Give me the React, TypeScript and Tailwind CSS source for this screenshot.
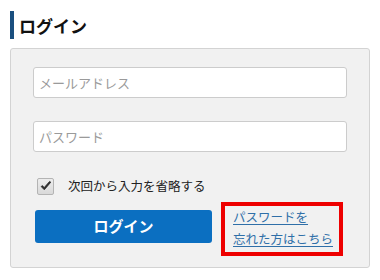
export default function App() {
  return (
    <div className="w-[380px] h-[280px] bg-white font-['Noto_Sans_CJK_JP',sans-serif] text-[#222]">
      <div className="pt-[11px] pl-[10px]">
        <h2 className="border-l-[4px] border-[#1a4f7f] pl-[5px] h-[28px] flex items-center text-[17px] font-bold leading-none text-[#111]">
          ログイン
        </h2>
      </div>

      <div className="mx-[10px] mt-[9px] h-[220px] rounded-[3px] border border-[#d3d3d3] bg-[#f1f1f1] px-[22px] pt-[18px]">
        <input
          type="text"
          placeholder="メールアドレス"
          className="block w-full h-[31px] rounded-[3px] border border-[#cccccc] bg-white px-[5px] text-[13px] placeholder:text-[#9a9a9a] outline-none"
        />
        <input
          type="password"
          placeholder="パスワード"
          className="mt-[23px] block w-full h-[31px] rounded-[3px] border border-[#cccccc] bg-white px-[5px] text-[13px] placeholder:text-[#9a9a9a] outline-none"
        />

        <label className="mt-[25px] ml-[4px] flex items-center gap-[14px] text-[12.5px] text-[#222]">
          <span className="flex h-[17px] w-[17px] items-center justify-center rounded-[2px] border border-[#b4b4b4] bg-gradient-to-b from-[#ededed] to-[#d9d9d9]">
            <svg viewBox="0 0 12 12" className="h-[12px] w-[12px]">
              <path d="M1.2 6.6 L4.3 9.8 L10.8 2.2 L9.6 1.4 L4.2 7.6 L2.4 5.6 Z" fill="#2b2b2b" stroke="#2b2b2b" strokeWidth="0.8" strokeLinejoin="round" />
            </svg>
          </span>
          次回から入力を省略する
        </label>

        <div className="mt-[6px] flex items-start">
          <button className="mt-[8px] ml-[2px] h-[33px] w-[177px] rounded-[3px] bg-[#0b6fc1] text-[15px] font-bold text-white">
            ログイン
          </button>
          <div className="ml-[9px] h-[54px] w-[122px] border-[4px] border-[#ee0000] pl-[8px]">
            <a href="#" className="block text-[12.5px] leading-[22px] text-[#2f6fa8] underline underline-offset-2">
              パスワードを
              <br />
              忘れた方はこちら
            </a>
          </div>
        </div>
      </div>
    </div>
  );
}
